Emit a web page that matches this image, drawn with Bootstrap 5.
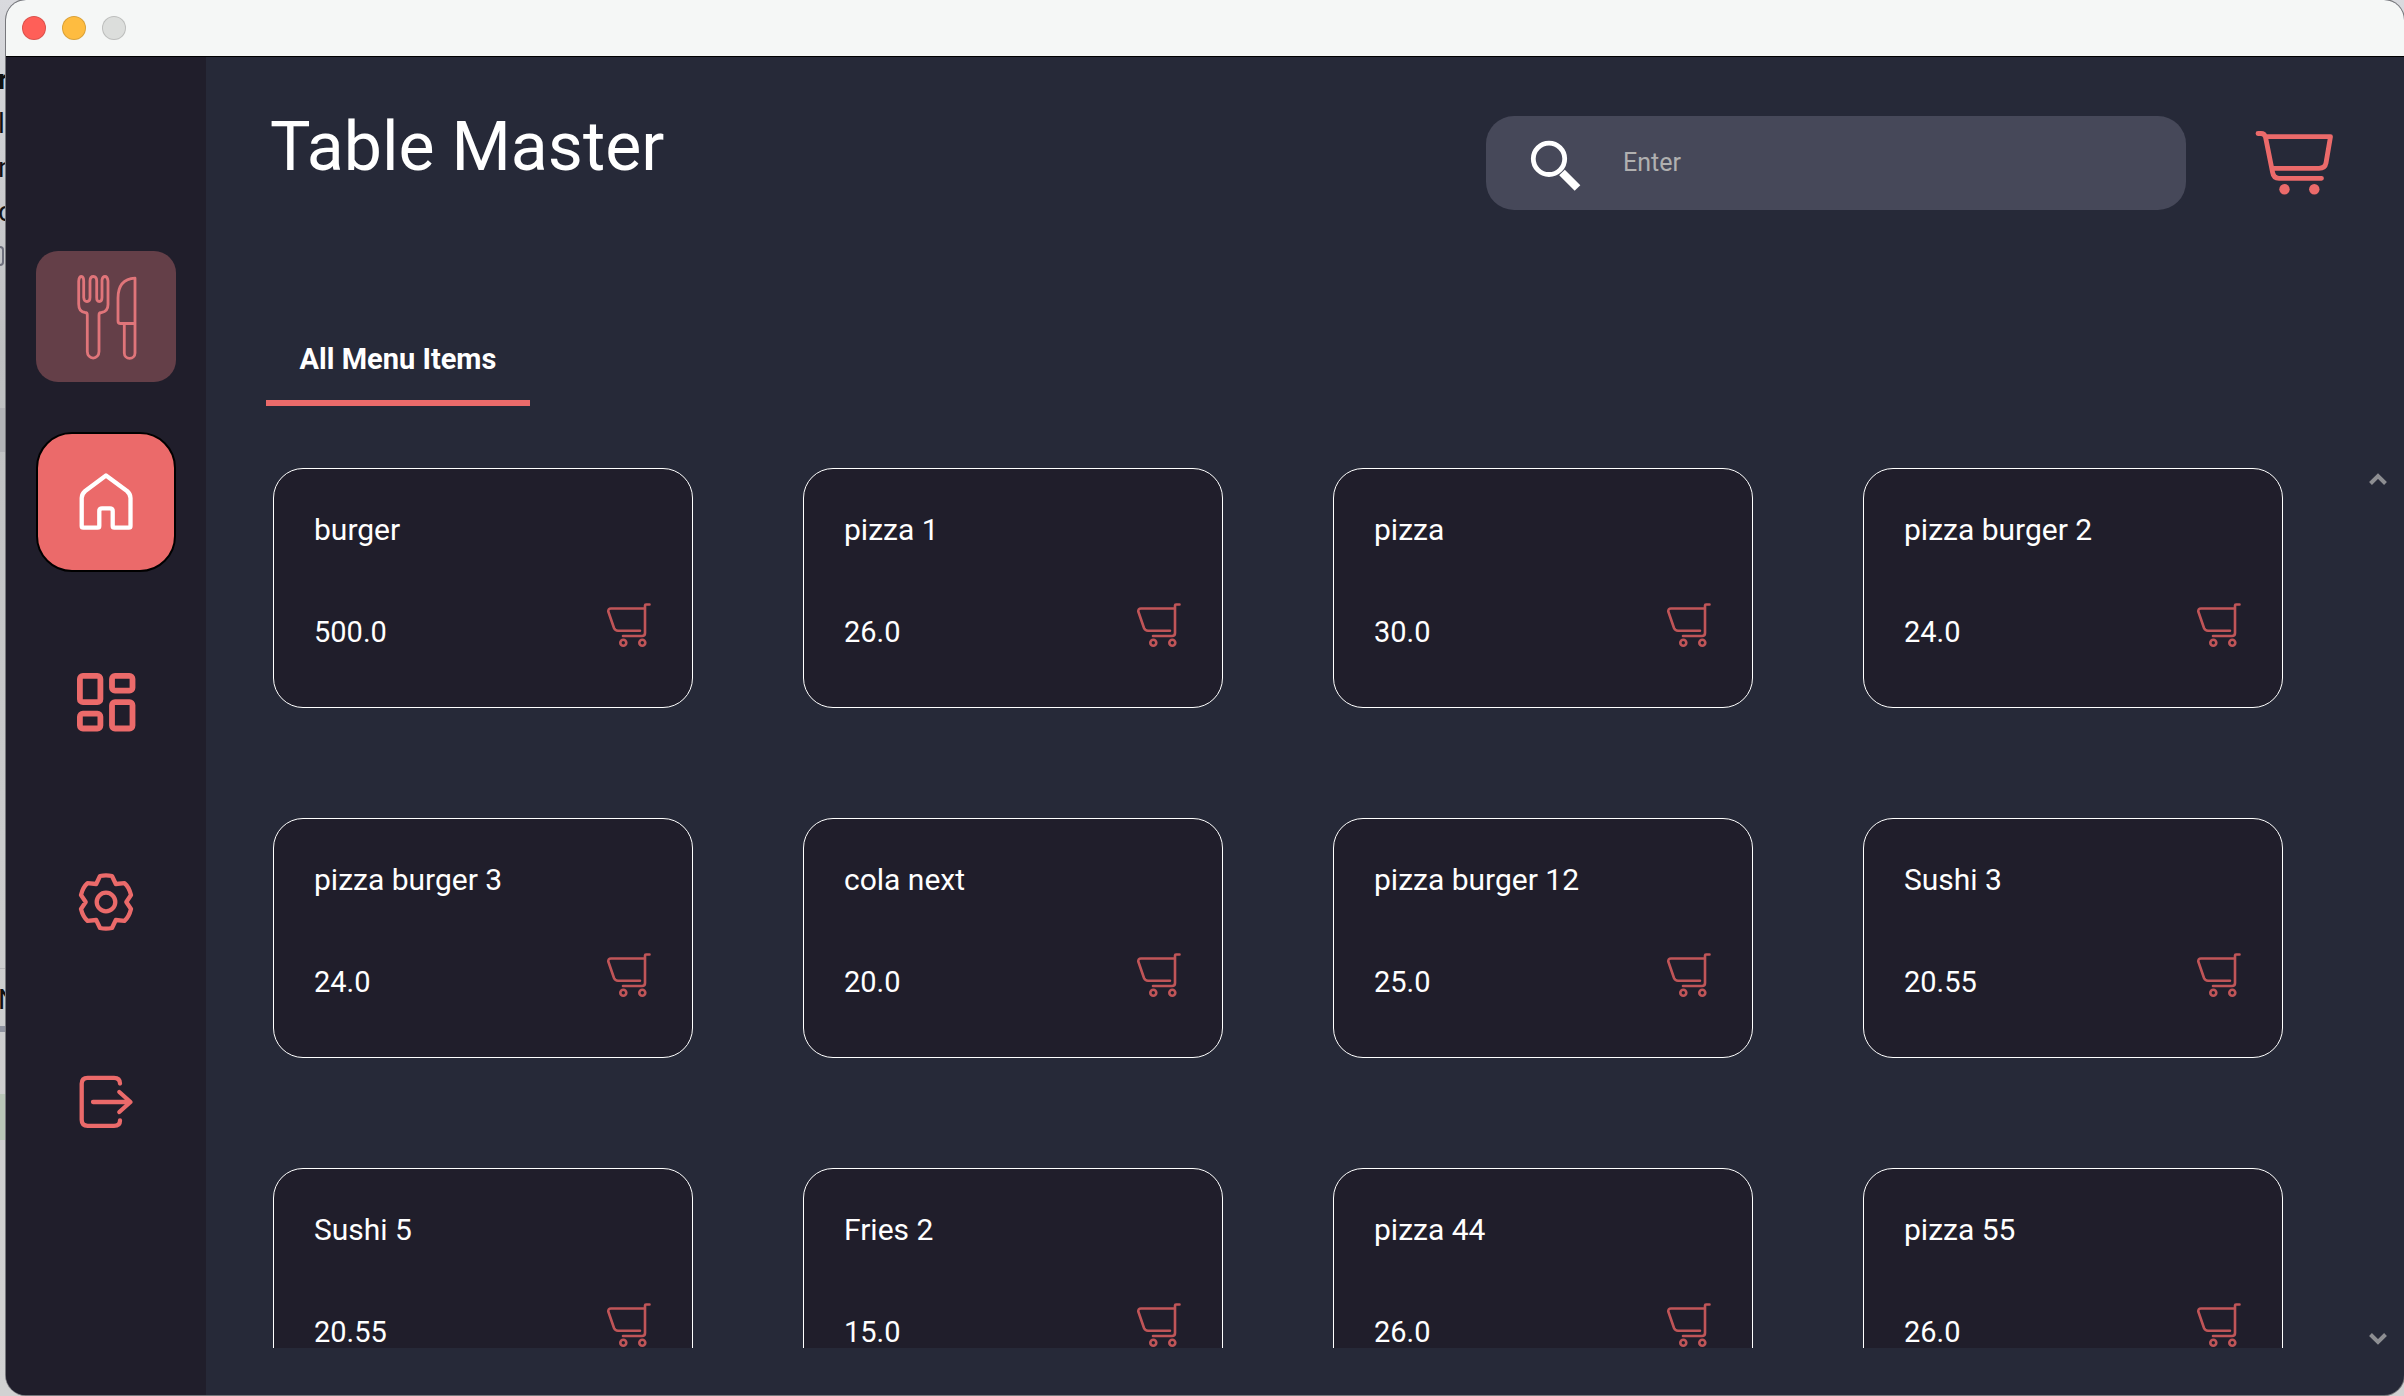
<!DOCTYPE html>
<html lang="en">
<head>
<meta charset="utf-8">
<meta name="viewport" content="width=device-width, initial-scale=1">
<title>Table Master</title>
<link rel="stylesheet" href="https://cdn.jsdelivr.net/npm/bootstrap@5.3.0/dist/css/bootstrap.min.css">
<style>
:root{--coral:#eb6a6a;--side:#201e2b;--main:#262938}
body{font-family:Roboto,"Liberation Sans",sans-serif;background:linear-gradient(#d9dade,#bfc0c2 25%,#cbcccd 60%,#d2d2d2);color:#fff;overflow:hidden}
svg{display:block;fill:none;stroke-linecap:round;stroke-linejoin:round}
.desk{padding:0 0 1px 6px}

/* sliver of the document lying under the app window */
.behind{position:absolute;left:0;top:0;width:6px;overflow:hidden;color:#111;padding-top:58px}
.behind p{margin:0;height:44px;font-size:28px;line-height:44px;white-space:nowrap;text-indent:-2px}
.strip{position:absolute;left:0;width:6px}
.s-box{top:246px;height:20px;width:4px;border:2px solid #6d6f7c;border-left:0;border-radius:0 5px 5px 0}
.s-sel{top:408px;height:44px;background:#b3b4b8}
.s-line{top:968px;height:1px;background:#b6b7ba}
.s-rule{top:1026px;height:6px;background:#8f93a0}
.s-green{top:1094px;height:46px;background:#b9c6b8}
.s-n{top:978px}

.app-window{border-radius:20px;background:var(--main);overflow:hidden;box-shadow:0 0 0 1px #77787c}
.titlebar{height:57px;background:#f5f7f6;border-bottom:1px solid #000;padding:0 0 1px 16px;gap:16px}
.dot{width:24px;height:24px;border-radius:50%;border:1px solid rgba(0,0,0,.14);padding:0}
.dot-red{background:#ff5f58}
.dot-amber{background:#febc40}
.dot-grey{background:#dcdedc}

.side{width:200px;background:var(--side);padding-top:194px}
.logo{width:140px;height:131px;border-radius:22px;background:#643f48;margin-bottom:50px;stroke:#e0757a}
.tiles{gap:60px}
.navtile{width:140px;height:140px;border-radius:36px;border:2px solid transparent;stroke:var(--coral)}
.navtile.on{background:var(--coral);border-color:#000;stroke:#fff}

.head{padding:59px 70px 0 64px}
.head h1{font-size:68px;line-height:62px;font-weight:400}
.tools{gap:68px}
.find{width:700px;height:94px;border-radius:28px;background:#464859;padding:0 30px 0 42px;gap:43px}
.find svg{overflow:visible;stroke:#fff}
.find input{font-size:25px;color:#fff;outline:0}
.find input::placeholder{color:#b0b0b0;opacity:1}
.topcart{stroke:var(--coral)}

.tabs-row{padding:110px 60px 0}
.tab{width:264px;height:86px;border:0;border-bottom:6px solid var(--coral);background:none;color:#fff;font-size:29px;font-weight:700}

.viewport{padding:62px 11px 47px 67px;gap:80px;min-height:0}
.clip{overflow:hidden;min-width:0}
.items{--bs-gutter-x:110px;--bs-gutter-y:110px}
.item{height:240px;border:1px solid #fff;border-radius:30px;background:var(--side);padding:42px 41px 0 40px}
.item h2{font-size:30px;line-height:38px;font-weight:400;margin-bottom:54px}
.price{font-size:29px;line-height:34px}
.add{stroke:#c05558;stroke-width:2.6}
.bar{width:30px;padding:5px 0 3px}
.bar svg{stroke:#8d8e92;stroke-width:4;stroke-linecap:butt;stroke-linejoin:miter}
</style>
</head>
<body>
<div class="desk vh-100">
<div class="behind vh-100" aria-hidden="true">
 <p class="fw-bold">r</p><p>le</p><p>nt</p><p>o</p>
 <div class="strip s-box"></div><div class="strip s-sel"></div><div class="strip s-line"></div>
 <p class="strip s-n">N</p><div class="strip s-rule"></div><div class="strip s-green"></div>
</div>
<div class="app-window position-relative h-100 d-flex flex-column">
 <header class="titlebar d-flex align-items-center flex-shrink-0">
  <button class="dot dot-red" aria-label="Close"></button>
  <button class="dot dot-amber" aria-label="Minimise"></button>
  <button class="dot dot-grey" aria-label="Zoom"></button>
 </header>
 <div class="d-flex flex-grow-1 overflow-hidden">
  <aside class="side d-flex flex-column align-items-center flex-shrink-0">
   <div class="logo d-flex align-items-center justify-content-center">
    <svg width="62" height="86" viewBox="0 0 62 86" stroke-width="2.8"><path d="M12.3 43V77.500a5.800 6.500 0 0 0 11.700 0V41q0-2.500 2.500-2.500 6.500-1 6.500-8V7q-.5-4.500-3-4.500T27 6V23.500q0 4-2.700 4T21.700 23.500V7q0-4.500-3.300-4.500T15 7v16.500q0 4-3 4t-3.300-4V7q0-4.500-2.300-4.500T3.700 7V30q0 8 6.500 8.500 2.100 0 2.100 2.500V44M60 4.200q-17 1-17 20V47q0 2.500 2.500 2.500H60M49.300 49.500V79a5.300 5.300 0 0 0 10.700 0V4.200"/></svg>
   </div>
   <nav class="tiles d-flex flex-column">
    <a href="#" class="navtile on d-flex align-items-center justify-content-center" aria-label="Home"><svg width="60" height="60" viewBox="0 0 60 60" stroke-width="4.300"><path d="M30 3.500 51 19q3.500 3 3.500 7V54q0 1.700-1.700 1.700H38.400q-1.700 0-1.700-1.700V39q0-2.700-2.700-2.700H26q-2.700 0-2.700 2.700V54q0 1.700-1.700 1.700H7.400q-1.700 0-1.700-1.700V26q0-4 3.500-7Z"/></svg></a>
    <a href="#" class="navtile d-flex align-items-center justify-content-center" aria-label="Dashboard"><svg width="60" height="60" viewBox="0 0 60 60" stroke-width="5.800"><rect x="3.900" y="3.900" width="20.500" height="26.300" rx="3"/><rect x="36" y="3.900" width="20.500" height="14.800" rx="3"/><rect x="3.900" y="41.700" width="20.500" height="14.800" rx="3"/><rect x="36" y="30.200" width="20.500" height="26.300" rx="3"/></svg></a>
    <a href="#" class="navtile d-flex align-items-center justify-content-center" aria-label="Settings"><svg width="60" height="60" viewBox="0 0 60 60" stroke-width="4.300"><path d="M24 4Q30 2.600 36 4L39.800 12 48.500 11.200Q53 15 55 23L50.300 30 55 37Q53 45 48.500 48.800L39.800 48 36 56Q30 57.400 24 56L20.200 48 11.500 48.800Q7 45 5 37L9.700 30 5 23Q7 15 11.500 11.200L20.200 12Z"/><circle cx="30" cy="30" r="9.300"/></svg></a>
    <a href="#" class="navtile d-flex align-items-center justify-content-center" aria-label="Log out"><svg width="60" height="60" viewBox="0 0 60 60" stroke-width="4.300"><path d="M44 11.500q0-5.700-6-5.700H11.700q-6 0-6 6v36q0 6 6 6H38q6 0 6-5.400M17 30H54M43.300 20 54.500 30 43.300 40"/></svg></a>
   </nav>
  </aside>
  <main class="flex-grow-1 d-flex flex-column overflow-hidden">
   <div class="head d-flex justify-content-between align-items-start">
    <h1 class="m-0">Table Master</h1>
    <div class="tools d-flex align-items-center">
     <label class="find d-flex align-items-center"><svg class="flex-shrink-0" width="52" height="50" viewBox="0 0 52 50"><circle cx="21" cy="20.800" r="15.700" stroke-width="4.800"/><path d="M34 34.500 49.500 50" stroke-width="8" stroke-linecap="butt"/></svg><input type="text" class="flex-grow-1 bg-transparent border-0 p-0" placeholder="Enter" aria-label="Search"></label>
     <a href="#" class="topcart" aria-label="Cart"><svg width="80" height="68" viewBox="0 0 80 68" stroke-width="4.800"><path d="M4 4.500H7Q10.500 4.500 11.500 8L18.500 43Q19.500 49.300 25 49.300H67.500M12 7.700H76.500L72 34Q71 39.300 65 39.300H19"/><g fill="#eb6a6a" stroke="none"><circle cx="30.500" cy="60.300" r="5.200"/><circle cx="60.300" cy="60.300" r="5.200"/></g></svg></a>
    </div>
   </div>
   <div class="tabs-row"><button class="tab">All Menu Items</button></div>
   <div class="viewport d-flex flex-grow-1">
    <div class="clip flex-grow-1"><div class="items row row-cols-4" id="items"></div></div>
    <div class="bar d-flex flex-column justify-content-between align-items-center flex-shrink-0">
     <button class="border-0 bg-transparent p-0" aria-label="Scroll up"><svg width="18" height="12" viewBox="0 0 18 12"><path d="M1.500 10.500 9 3 16.500 10.500"/></svg></button>
     <button class="border-0 bg-transparent p-0" aria-label="Scroll down"><svg width="18" height="12" viewBox="0 0 18 12"><path d="M1.500 1.500 9 9 16.500 1.500"/></svg></button>
    </div>
   </div>
  </main>
 </div>
</div>
</div>
<script src="https://cdn.jsdelivr.net/npm/bootstrap@5.3.0/dist/js/bootstrap.bundle.min.js"></script>
<script>
const menu=[['burger','500.0'],['pizza 1','26.0'],['pizza','30.0'],['pizza burger 2','24.0'],['pizza burger 3','24.0'],['cola next','20.0'],['pizza burger 12','25.0'],['Sushi 3','20.55'],['Sushi 5','20.55'],['Fries 2','15.0'],['pizza 44','26.0'],['pizza 55','26.0']];
document.getElementById('items').innerHTML=menu.map(([name,price])=>`<div class="col"><article class="item"><h2>${name}</h2><div class="d-flex justify-content-between align-items-end"><span class="price">${price}</span><button class="border-0 bg-transparent p-0" aria-label="Add ${name} to cart"><svg class="add" width="45" height="46" viewBox="0 0 45 46"><path d="M43.500 1.500H40Q39 1.500 39 2.500V30Q39 33 36 33H17M39 5.500H5Q2 5.500 2.300 8.500L8 25Q9.200 27.700 12 27.700H34"/><circle cx="17.300" cy="39.700" r="3"/><circle cx="36.300" cy="39.700" r="3"/></svg></button></div></article></div>`).join('');
</script>
</body></html>
